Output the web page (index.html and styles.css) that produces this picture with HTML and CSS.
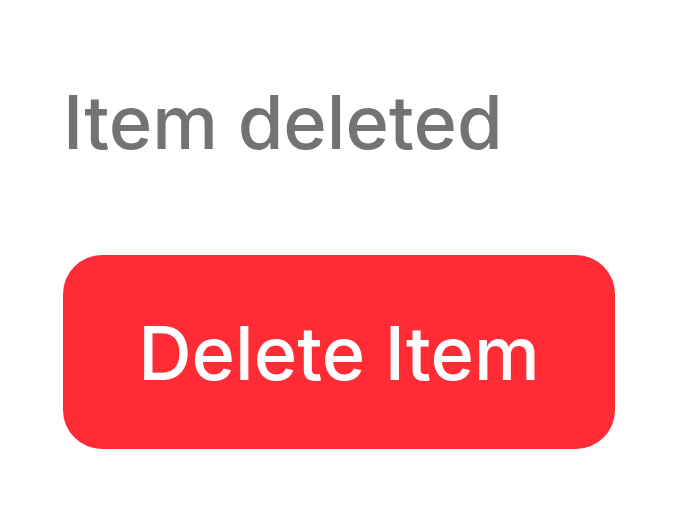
FILE: index.html
```html
<!DOCTYPE html>
<html lang="en">
<head>
<meta charset="utf-8">
<meta name="viewport" content="width=device-width, initial-scale=1">
<title>Delete Item</title>
<link rel="stylesheet" href="styles.css">
</head>
<body>
<main class="panel">
  <p class="status" role="status">Item deleted</p>
  <button class="delete-button" type="button">Delete Item</button>
</main>
</body>
</html>
```

FILE: styles.css
```css
body {
  margin: 0;
  background: #fff;
  font-family: Inter, "Liberation Sans", sans-serif;
  font-weight: 500;
}

.panel {
  display: flex;
  flex-direction: column;
  gap: 78px;
  padding: 67px 63px 58px;
}

.status {
  margin: 0;
  color: #737373;
  font-size: 74px;
  line-height: 110px;
  white-space: nowrap;
}

.delete-button {
  padding: 43px 24px 41px;
  border: 0;
  border-radius: 39px;
  background: #ff2c36;
  color: #fff;
  font: inherit;
  font-size: 74px;
  line-height: 110px;
  white-space: nowrap;
}
```
